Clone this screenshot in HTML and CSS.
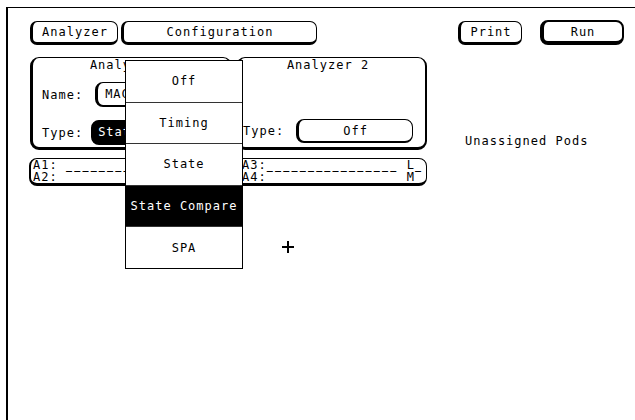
FILE: index.html
```html
<!DOCTYPE html>
<html>
<head>
<meta charset="utf-8">
<link rel="stylesheet" href="styles.css">
</head>
<body>
<div class="screen">
  <div class="topbar">
    <div class="btn btn-analyzer">Analyzer</div>
    <div class="btn btn-config">Configuration</div>
    <div class="btn btn-print">Print</div>
    <div class="btn btn-run">Run</div>
  </div>
  <div class="main">
    <div class="left">
      <div class="panels">
        <div class="panel p1">
          <div class="ptitle">Analyzer 1</div>
          <div class="row row-name"><span class="lbl">Name:</span><div class="field f-name">MACHINE 1</div></div>
          <div class="row row-type"><span class="lbl">Type:</span><div class="field f-type sel">State Compare</div></div>
        </div>
        <div class="panel p2">
          <div class="ptitle">Analyzer 2</div>
          <div class="row row-type2"><span class="lbl">Type:</span><div class="field f-type2">Off</div></div>
        </div>
      </div>
      <div class="pods">
        <div class="podcol podcol-a">
          <div class="podline">A1: <span class="blank">________________</span> J<span class="blank">_</span></div>
          <div class="podline">A2: <span class="blank">________________</span> K<span class="blank">_</span></div>
        </div>
        <div class="podcol podcol-b">
          <div class="podline">A3:<span class="blank">________________</span> L<span class="blank">_</span></div>
          <div class="podline">A4:<span class="blank">________________</span> M<span class="blank">_</span></div>
        </div>
      </div>
    </div>
    <div class="unassigned">Unassigned Pods</div>
  </div>
  <div class="menu">
    <div class="mitem">Off</div>
    <div class="mitem">Timing</div>
    <div class="mitem">State</div>
    <div class="mitem active">State Compare</div>
    <div class="mitem">SPA</div>
  </div>
  <div class="cursor"><span class="ch"></span><span class="cv"></span></div>
</div>
</body>
</html>
```

FILE: styles.css
```css
html, body {
  margin: 0;
  padding: 0;
  background: #fff;
  overflow: hidden;
}
body {
  width: 635px;
  height: 420px;
  font-family: "DejaVu Sans Mono", "Liberation Mono", monospace;
  font-size: 12px;
  letter-spacing: 1px;
  color: #000;
}
.screen {
  position: relative;
  margin: 7px 0 0 6px;
  height: 413px;
  border-top: 1px solid #000;
  border-left: 2px solid #000;
  box-sizing: border-box;
}
.topbar {
  display: flex;
  align-items: flex-end;
  padding: 12px 11px 0 22px;
  height: 37px;
  box-sizing: border-box;
}
.btn {
  box-sizing: border-box;
  height: 24px;
  border: 1px solid #000;
  border-left-width: 3px;
  border-bottom-width: 3px;
  border-radius: 7px;
  display: flex;
  align-items: center;
  justify-content: center;
  line-height: 14px;
}
.btn-analyzer { width: 88px; }
.btn-config { width: 196px; margin-left: 3px; }
.btn-print { width: 64px; margin-left: auto; }
.btn-run {
  width: 84px;
  height: 25px;
  margin-left: 18px;
  border-width: 2px;
  border-left-width: 4px;
  border-bottom-width: 4px;
  border-radius: 8px;
}
.main {
  display: flex;
  padding: 12px 0 0 21px;
}
.left {
  width: 398px;
}
.panels {
  display: flex;
  gap: 4px;
  padding-left: 1px;
}
.panel {
  box-sizing: border-box;
  height: 93px;
  border: 1px solid #000;
  border-left-width: 3px;
  border-right-width: 2px;
  border-bottom-width: 3px;
  border-radius: 9px;
}
.p1 { width: 202px; padding: 0 10px 0 9px; }
.p2 { width: 191px; padding: 0 12px 0 4px; }
.ptitle {
  text-align: center;
  line-height: 14px;
}
.row {
  display: flex;
  align-items: center;
}
.row-name { margin-top: 10px; }
.row-type { margin-top: 13px; }
.row-type2 { margin-top: 47px; }
.lbl { flex: none; }
.field {
  box-sizing: border-box;
  height: 25px;
  border: 1px solid #000;
  border-left-width: 3px;
  border-bottom-width: 2px;
  border-radius: 8px;
  display: flex;
  align-items: center;
  line-height: 14px;
  white-space: nowrap;
  overflow: hidden;
}
.f-name {
  margin-left: 12px;
  flex: 1;
  padding-left: 7px;
}
.f-type {
  margin-left: 8px;
  flex: 1;
  padding-left: 4px;
}
.sel {
  background: #000;
  color: #fff;
}
.f-type2 {
  margin-left: 12px;
  width: 117px;
  height: 24px;
  justify-content: center;
}
.pods {
  box-sizing: border-box;
  margin-top: 8px;
  height: 28px;
  display: flex;
  border: 1px solid #000;
  border-left-width: 2px;
  border-bottom-width: 3px;
  border-radius: 8px;
  padding: 0 0 0 2px;
  line-height: 12px;
  overflow: hidden;
  white-space: pre;
}
.podcol { display: flex; flex-direction: column; }
.podcol-a { width: 209px; }
.podline { height: 12px; }
.blank {
  font-size: 10px;
  letter-spacing: 2.22px;
  font-weight: bold;
}
.unassigned {
  margin-left: 38px;
  padding-top: 77px;
  line-height: 14px;
}
.menu {
  position: absolute;
  left: 117px;
  top: 52px;
  width: 118px;
  height: 209px;
  box-sizing: border-box;
  background: #fff;
  border: 1px solid #000;
  display: flex;
  flex-direction: column;
}
.mitem {
  flex: 1;
  display: flex;
  align-items: center;
  justify-content: center;
  border-top: 1px solid #333;
  line-height: 14px;
  white-space: nowrap;
}
.mitem:first-child { border-top: none; }
.mitem.active {
  background: #000;
  color: #fff;
}
.cursor {
  position: absolute;
  left: 274px;
  top: 233px;
  width: 12px;
  height: 12px;
}
.ch, .cv {
  position: absolute;
  background: #000;
}
.ch { left: 0; top: 5px; width: 12px; height: 2px; }
.cv { left: 5px; top: 0; width: 2px; height: 12px; }
```
